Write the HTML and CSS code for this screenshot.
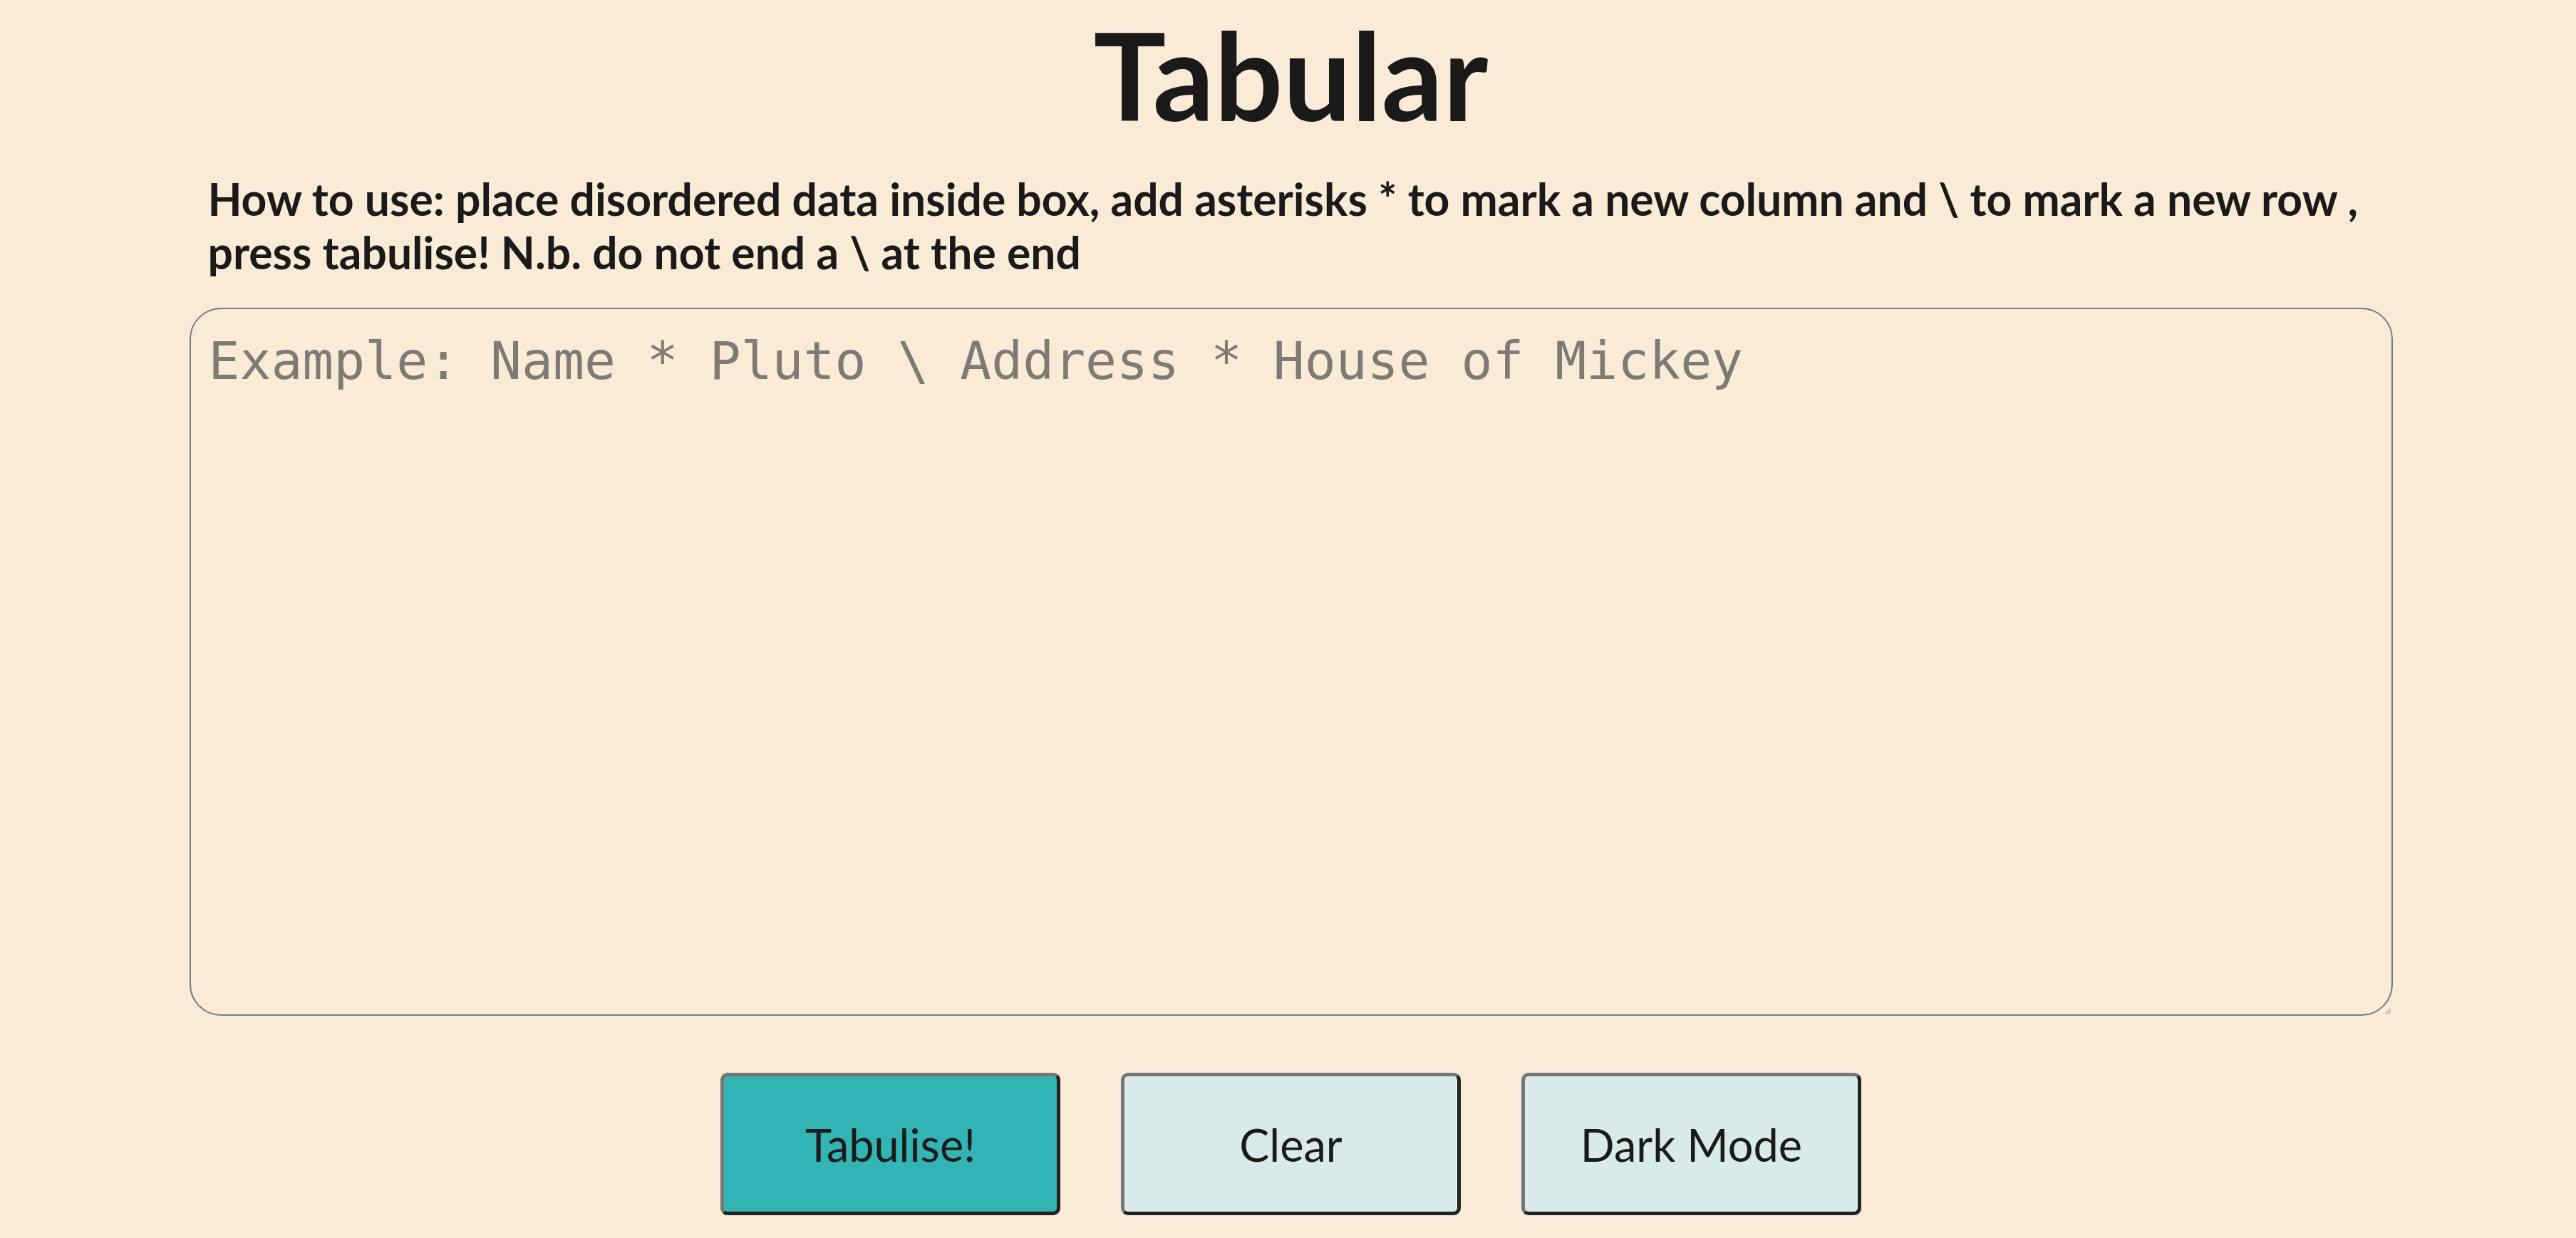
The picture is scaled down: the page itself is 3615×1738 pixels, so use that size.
FILE: index.html
```html
<!DOCTYPE html>
<html lang="en">
<head>
<meta charset="utf-8">
<title>Tabular</title>
<link rel="stylesheet" href="styles.css">
</head>
<body>
<main class="page">
  <h1 class="title">Tabular</h1>
  <p class="howto">How to use: place disordered data inside box, add asterisks * to mark a new column and \ to mark a new row ,<br>press tabulise! N.b. do not end a \ at the end</p>
  <textarea class="input" placeholder="Example: Name * Pluto \ Address * House of Mickey"></textarea>
  <div class="actions">
    <button class="btn btn-primary">Tabulise!</button>
    <button class="btn">Clear</button>
    <button class="btn">Dark Mode</button>
  </div>
</main>
</body>
</html>
```
FILE: styles.css
```css
body {
  margin: 0;
  background: #faebd7;
  color: #1a1a1a;
  font-family: Lato, "Open Sans", sans-serif;
}

.page {
  display: flex;
  flex-direction: column;
  align-items: center;
  padding-left: 8px;
}

.title {
  margin: 20px 0 0;
  font-size: 170px;
  line-height: 168px;
  font-weight: 700;
}

.howto {
  width: 3040px;
  margin: 53px 0 0;
  font-size: 62.4px;
  line-height: 75px;
  font-weight: 700;
}

.input {
  display: block;
  width: 3092px;
  height: 994px;
  margin: 41px 0 0;
  box-sizing: border-box;
  border: 2px solid #7a7a7a;
  border-radius: 44px;
  background: transparent;
  padding: 30px 25px;
  font-family: "DejaVu Sans Mono", monospace;
  font-size: 73px;
  line-height: 85px;
  color: #1a1a1a;
}

.input::placeholder {
  color: #7f7a75;
}

.actions {
  display: flex;
  gap: 85px;
  margin-top: 80px;
}

.btn {
  width: 477px;
  height: 200px;
  box-sizing: border-box;
  border: 5px solid;
  border-color: #777 #222 #222 #777;
  border-radius: 10px;
  background: #d8eaea;
  font-family: Lato, "Open Sans", sans-serif;
  font-size: 63px;
  color: #1a1a1a;
  padding: 0;
}

.btn-primary {
  background: #33b4b4;
}
```
